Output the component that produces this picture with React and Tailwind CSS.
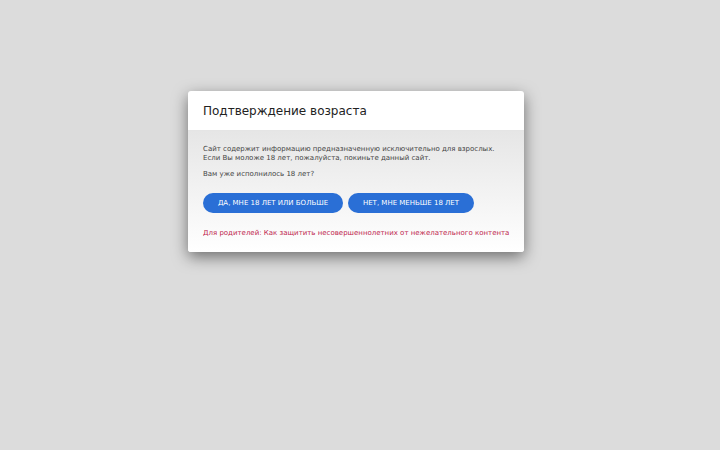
export default function App() {
  return (
    <div className="min-h-screen w-full bg-[#dcdcdc] font-['DejaVu_Sans',sans-serif] pt-[91px]">
      <div className="ml-[188px] w-[336px] overflow-hidden rounded-[3px] bg-white shadow-[0_5px_15px_rgba(0,0,0,0.5)]">
        <div className="flex h-[40px] items-center border-b border-[#e5e5e5] px-[15px]">
          <h1 className="text-[12px] leading-none text-[#222]">Подтверждение возраста</h1>
        </div>
        <div className="bg-gradient-to-b from-[#e6e6e6] to-white px-[15px] pt-[14px] pb-[14px] text-[7px] leading-[9px] text-[#444]">
          <p>Сайт содержит информацию предназначенную исключительно для взрослых.</p>
          <p>Если Вы моложе 18 лет, пожалуйста, покиньте данный сайт.</p>
          <p className="mt-[7px]">Вам уже исполнилось 18 лет?</p>
          <div className="mt-[14px] flex gap-[5px]">
            <button className="h-[20px] w-[140px] rounded-full bg-[#2a6fd6] text-[7px] uppercase text-white">
              Да, мне 18 лет или больше
            </button>
            <button className="h-[20px] w-[126px] rounded-full bg-[#2a6fd6] text-[7px] uppercase text-white">
              Нет, мне меньше 18 лет
            </button>
          </div>
          <a className="mt-[16px] block whitespace-nowrap text-[#c0264e]">
            Для родителей: Как защитить несовершеннолетних от нежелательного контента
          </a>
        </div>
      </div>
    </div>
  );
}
